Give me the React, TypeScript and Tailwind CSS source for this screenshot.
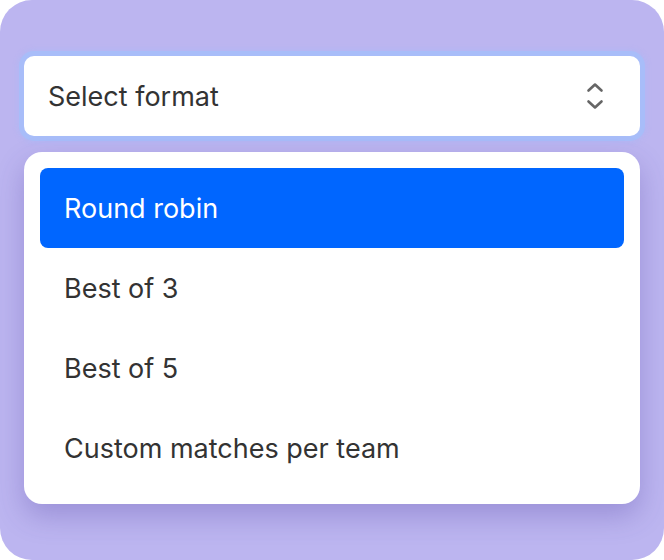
import React from "react";

const options = ["Round robin", "Best of 3", "Best of 5", "Custom matches per team"];

export default function App() {
  return (
    <div className="w-[664px] h-[560px] bg-white">
      <div
        className="w-full h-full rounded-[32px] bg-[#bcb5f0] px-6 pt-14 flex flex-col gap-4"
        style={{ fontFamily: "Inter, 'Noto Sans', sans-serif" }}
      >
        <button className="h-20 w-full rounded-[10px] bg-white ring-[5px] ring-[#a8bdf9] shadow-[0_0_4px_7px_rgba(165,185,250,0.35)] flex items-center justify-between pl-6 pr-[36px] text-left">
          <span className="text-[27px] text-[#333333] pt-[3px]">Select format</span>
          <svg width="18" height="30" viewBox="0 0 18 30" fill="none" stroke="#666666" strokeWidth="2.6" strokeLinecap="round" strokeLinejoin="round">
            <path d="M2.5 9.5 L9 3.5 L15.5 9.5" />
            <path d="M2.5 20.5 L9 26.5 L15.5 20.5" />
          </svg>
        </button>
        <div className="w-full rounded-[18px] bg-white p-4 flex flex-col shadow-[0_12px_28px_rgba(70,50,150,0.28)]">
          {options.map((o, i) => (
            <div
              key={o}
              className={
                i === 0
                  ? "h-20 rounded-[8px] bg-[#0066ff] text-white flex items-center px-6 pt-[2px] text-[27px]"
                  : "h-20 rounded-[8px] text-[#333333] flex items-center px-6 pt-[2px] text-[27px]"
              }
            >
              {o}
            </div>
          ))}
        </div>
      </div>
    </div>
  );
}
